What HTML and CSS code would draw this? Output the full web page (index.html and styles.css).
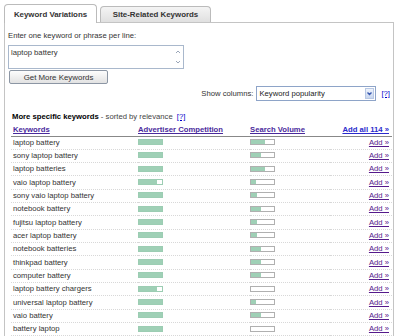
FILE: index.html
```html
<!DOCTYPE html>
<html>
<head>
    <title>Keyword Tool</title>
    <link rel="stylesheet" href="styles.css">
</head>
<body>
    <div class="tabs">
        <div class="tab active">Keyword Variations</div>
        <div class="tab">Site-Related Keywords</div>
    </div>

    <div class="panel">
        <div class="label">Enter one keyword or phrase per line:</div>
        <div class="textbox">
            <span class="textbox-text">laptop battery</span>
            <div class="scroll">
                <svg width="8" height="8" viewBox="0 0 8 8"><path d="M2 5 L4 3 L6 5" fill="none" stroke="#9aa6b8" stroke-width="1"/></svg>
                <svg width="8" height="8" viewBox="0 0 8 8"><path d="M2 3 L4 5 L6 3" fill="none" stroke="#9aa6b8" stroke-width="1"/></svg>
            </div>
        </div>
        <button class="get-btn">Get More Keywords</button>

        <div class="columns-row">
            <span class="columns-label">Show columns:</span>
            <div class="select">
                <span>Keyword popularity</span>
                <div class="select-btn">
                    <svg width="7" height="7" viewBox="0 0 7 7"><path d="M1.5 2.5 L3.5 4.5 L5.5 2.5" fill="none" stroke="#3a5ab0" stroke-width="1.4"/></svg>
                </div>
            </div>
            <a class="help last" href="#">[?]</a>
        </div>

        <div class="section-title"><b>More specific keywords</b> - sorted by relevance <a class="help" href="#">[?]</a></div>

        <table class="results">
            <thead>
                <tr>
                    <th class="col-kw"><a href="#">Keywords</a></th>
                    <th class="col-comp"><a href="#">Advertiser Competition</a></th>
                    <th class="col-vol"><a href="#">Search Volume</a></th>
                    <th class="col-add"><a class="add-all" href="#">Add all 114 &raquo;</a></th>
                </tr>
            </thead>
            <tbody id="rows"></tbody>
        </table>
    </div>

    <script>
        const keywords = [
            ['laptop battery', 100, 60],
            ['sony laptop battery', 100, 44],
            ['laptop batteries', 100, 60],
            ['vaio laptop battery', 80, 20],
            ['sony vaio laptop battery', 100, 24],
            ['notebook battery', 100, 44],
            ['fujitsu laptop battery', 100, 24],
            ['acer laptop battery', 100, 24],
            ['notebook batteries', 100, 44],
            ['thinkpad battery', 100, 44],
            ['computer battery', 100, 44],
            ['laptop battery chargers', 80, 0],
            ['universal laptop battery', 100, 20],
            ['vaio battery', 100, 44],
            ['battery laptop', 100, 0]
        ];

        const rows = document.getElementById('rows');
        keywords.forEach(k => {
            const tr = document.createElement('tr');
            tr.innerHTML = `
                <td class="col-kw">${k[0]}</td>
                <td class="col-comp"><div class="bar comp"><div class="fill" style="width:${k[1]}%"></div></div></td>
                <td class="col-vol"><div class="bar vol"><div class="fill" style="width:${k[2]}%"></div></div></td>
                <td class="col-add"><a href="#">Add &raquo;</a></td>
            `;
            rows.appendChild(tr);
        });
    </script>
</body>
</html>
```

FILE: styles.css
```css
* {
    margin: 0;
    padding: 0;
    box-sizing: border-box;
    font-family: "Liberation Sans", Arial, sans-serif;
}

body {
    background-color: #fff;
    font-size: 7.7px;
    color: #333;
    overflow: hidden;
}

a {
    color: #551a8b;
}

.tabs {
    display: flex;
    align-items: flex-end;
    gap: 3px;
    padding: 4px 0 0 4px;
    height: 22px;
}

.tab {
    height: 16px;
    width: 111px;
    border: 1px solid #bbb;
    border-bottom: none;
    border-radius: 4px 4px 0 0;
    background: linear-gradient(#f4f4f4, #e0e0e0);
    font-weight: bold;
    font-size: 7.9px;
    color: #333;
    display: flex;
    align-items: center;
    justify-content: center;
}

.tab.active {
    height: 19px;
    width: 93px;
    background: #fff;
    margin-bottom: -1px;
    position: relative;
    z-index: 1;
}

.panel {
    margin-left: 4px;
    width: 390px;
    height: 320px;
    border: 1px solid #c4c4c4;
    border-bottom: none;
    padding: 8px 3px 0 3px;
}

.label {
    line-height: 10px;
    height: 14px;
}

.textbox {
    width: 176px;
    height: 24px;
    border: 1px solid #a9b8cc;
    display: flex;
    justify-content: space-between;
    padding: 2px 0 0 2px;
}

.textbox-text {
    line-height: 9px;
}

.scroll {
    width: 10px;
    display: flex;
    flex-direction: column;
    justify-content: space-between;
    align-items: center;
    padding-bottom: 2px;
}

.get-btn {
    margin: 1px 0 0 1px;
    width: 99px;
    height: 14px;
    border: 1px solid #8c96a4;
    border-radius: 2px;
    background: linear-gradient(#fdfdfd, #e2e2e2);
    font-size: 7.9px;
    color: #333;
    display: block;
}

.columns-row {
    display: flex;
    justify-content: flex-end;
    align-items: center;
    gap: 2px;
    margin-top: 2px;
    height: 15px;
}

.columns-label {
    margin-right: 1px;
}

.select {
    width: 120px;
    height: 15px;
    border: 1px solid #8ea4c8;
    display: flex;
    justify-content: space-between;
    align-items: center;
    padding-left: 2px;
    color: #222;
}

.select-btn {
    width: 9px;
    height: 11px;
    margin-right: 1px;
    background: linear-gradient(#eef3fc, #c8d6ee);
    border: 1px solid #b8c8e4;
    display: flex;
    align-items: center;
    justify-content: center;
}

.help {
    color: #0000cc;
    margin-left: 2px;
    margin-right: 2px;
}

.help.last {
    margin-left: 3px;
    margin-right: 0;
}

.section-title {
    margin-top: 11px;
    padding-left: 4px;
    line-height: 10px;
    color: #444;
}

.section-title b {
    color: #000;
}

.results {
    margin: 2px 0 0 3px;
    width: 381px;
    border-collapse: collapse;
}

.results th {
    height: 12px;
    font-weight: bold;
    text-align: left;
    border-bottom: 1px solid #888;
    vertical-align: middle;
}

.results th a {
    color: #4a2a9c;
}

.results th .add-all {
    color: #2a2acc;
}

.results td {
    height: 13.33px;
    border-bottom: 1px dotted #d8d8d8;
    vertical-align: middle;
    padding-bottom: 1px;
}

.col-kw {
    width: 127px;
    padding-left: 2px;
}

.col-comp {
    width: 112px;
}

.col-vol {
    width: 80px;
}

.results .col-add {
    text-align: right;
    padding-right: 3px;
}

.bar {
    width: 25px;
    height: 6px;
    border: 1px solid #b0b0b0;
    background: #fff;
}

.bar.comp {
    border-color: #9ccdb3;
}

.fill {
    height: 100%;
    background: #9fd0b6;
}
```
